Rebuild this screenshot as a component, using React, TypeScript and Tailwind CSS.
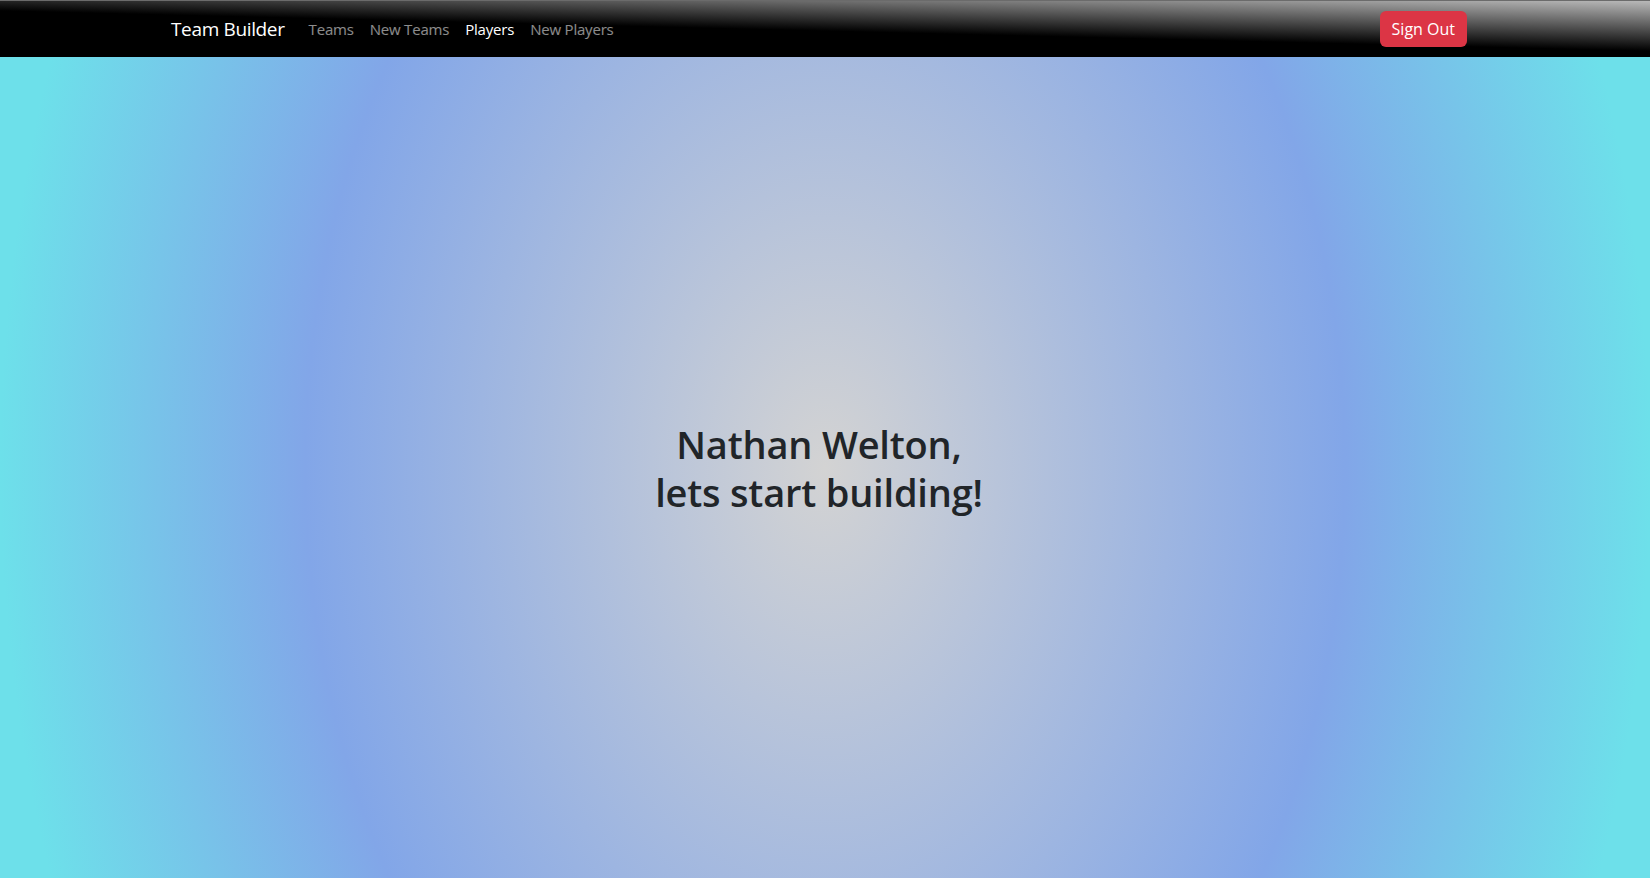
import React from 'react';

const links = [
    { label: 'Teams', active: false },
    { label: 'New Teams', active: false },
    { label: 'Players', active: true },
    { label: 'New Players', active: false },
];

const NavBar: React.FC = () => (
    <nav className="h-[57px] shrink-0 border-t border-[#6b6b6b] bg-[linear-gradient(181.4deg,#b8b8b8_0%,#000_52%)] flex items-center pl-[171px] pr-[183px]">
        <a className="text-[19px] leading-[30px] tracking-[-0.35px] text-white mr-4">Team Builder</a>
        <ul className="flex items-center">
            {links.map((l) => (
                <li key={l.label}>
                    <a className={`block px-2 py-2 text-[15px] leading-6 tracking-[-0.2px] ${l.active ? 'text-white' : 'text-white/55'}`}>{l.label}</a>
                </li>
            ))}
        </ul>
        <button className="ml-auto bg-[#dc3545] text-white text-[16px] leading-6 px-3 py-[6px] rounded-md">
            Sign Out
        </button>
    </nav>
);

export default function App() {
    return (
        <div className="h-screen flex flex-col font-['Open_Sans','Noto_Sans',sans-serif]">
            <NavBar />
            <main className="flex-1 flex items-center justify-center pr-[12px] bg-[radial-gradient(ellipse_825px_1190px_at_50%_50%,#d3d3d3_0%,#82a6e8_63%,#6de0ea_100%)]">
                <h1 className="text-[38px] leading-[48px] font-semibold tracking-[-0.2px] text-[#212529] text-center">
                    Nathan Welton,
                    <br />
                    lets start building!
                </h1>
            </main>
        </div>
    );
}
